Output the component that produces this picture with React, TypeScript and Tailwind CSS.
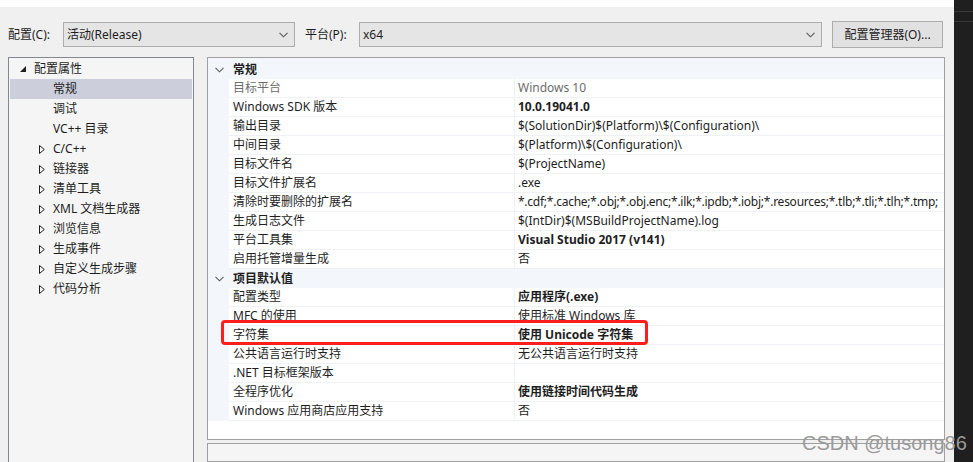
import React from "react";

type Row = { label: string; value?: string; bold?: boolean; dim?: boolean; tight?: boolean };

const general: Row[] = [
  { label: "目标平台", value: "Windows 10", dim: true },
  { label: "Windows SDK 版本", value: "10.0.19041.0", bold: true },
  { label: "输出目录", value: "$(SolutionDir)$(Platform)\\$(Configuration)\\" },
  { label: "中间目录", value: "$(Platform)\\$(Configuration)\\" },
  { label: "目标文件名", value: "$(ProjectName)" },
  { label: "目标文件扩展名", value: ".exe" },
  {
    label: "清除时要删除的扩展名",
    value: "*.cdf;*.cache;*.obj;*.obj.enc;*.ilk;*.ipdb;*.iobj;*.resources;*.tlb;*.tli;*.tlh;*.tmp;",
    tight: true,
  },
  { label: "生成日志文件", value: "$(IntDir)$(MSBuildProjectName).log" },
  { label: "平台工具集", value: "Visual Studio 2017 (v141)", bold: true },
  { label: "启用托管增量生成", value: "否" },
];

const defaults: Row[] = [
  { label: "配置类型", value: "应用程序(.exe)", bold: true },
  { label: "MFC 的使用", value: "使用标准 Windows 库" },
  { label: "字符集", value: "使用 Unicode 字符集", bold: true },
  { label: "公共语言运行时支持", value: "无公共语言运行时支持" },
  { label: ".NET 目标框架版本", value: "" },
  { label: "全程序优化", value: "使用链接时间代码生成", bold: true },
  { label: "Windows 应用商店应用支持", value: "否" },
];

const tree = ["常规", "调试", "VC++ 目录", "C/C++", "链接器", "清单工具", "XML 文档生成器", "浏览信息", "生成事件", "自定义生成步骤", "代码分析"];

function Chevron() {
  return (
    <svg width="9" height="6" viewBox="0 0 9 6" className="shrink-0">
      <path d="M0.5 0.8 L4.5 4.8 L8.5 0.8" fill="none" stroke="#5a5a5a" strokeWidth="1.1" />
    </svg>
  );
}

function Combo({ text, width }: { text: string; width: string }) {
  return (
    <div className={`${width} h-[25px] flex items-center justify-between border border-[#adadad] bg-[#e5e5e5] pl-[3px] pr-[6px]`}>
      <span>{text}</span>
      <Chevron />
    </div>
  );
}

function Category({ label }: { label: string }) {
  return (
    <div className="flex h-[19px] items-center bg-[#f3f6fb]">
      <div className="w-[21px] flex justify-center pl-[1px]">
        <Chevron />
      </div>
      <span className="pl-[4px] font-bold">{label}</span>
    </div>
  );
}

function PropRow({ r }: { r: Row }) {
  return (
    <div className="flex h-[19px]">
      <div className="w-[21px] shrink-0 bg-[#f3f6fb]" />
      <div className={`w-[285px] shrink-0 border-b border-[#eef1f6] pl-[4px] leading-[18px] bg-white ${r.dim ? "text-[#6d6d6d]" : ""}`}>
        {r.label}
      </div>
      <div
        className={`flex-1 min-w-0 overflow-hidden whitespace-nowrap border-b border-l border-[#eef1f6] pl-[3px] leading-[18px] bg-white ${
          r.bold ? "font-bold" : ""
        } ${r.dim ? "text-[#6d6d6d]" : ""} ${r.tight ? "tracking-[-0.25px]" : ""}`}
      >
        {r.value}
      </div>
    </div>
  );
}

export default function App() {
  return (
    <div className="relative w-[973px] h-[462px] overflow-hidden flex text-[12px] text-[#1e1e1e] font-['Segoe_UI','Noto_Sans','Noto_Sans_CJK_SC',sans-serif]">
      <div className="w-[954px] flex flex-col bg-[#f0f0f0]">
        <div className="h-[7px] bg-white" />
        <div className="flex items-center h-[29px] mt-[13px] pl-[8px]">
          <span className="w-[55px]">配置(C):</span>
          <Combo text="活动(Release)" width="w-[232px]" />
          <span className="ml-[10px] w-[54px]">平台(P):</span>
          <Combo text="x64" width="w-[463px]" />
          <button className="ml-[10px] w-[111px] h-[27px] border border-[#adadad] bg-[#e1e1e1]">配置管理器(O)...</button>
        </div>
        <div className="flex mt-[8px] pl-[8px] gap-[13px] flex-1 min-h-0">
          <div className="w-[186px] h-[420px] border border-[#828790] bg-[#f5f5f5] p-px">
            <div className="flex items-center h-[20px]">
              <svg width="6" height="6" viewBox="0 0 6 6" className="ml-[10px]">
                <path d="M6 0 L6 6 L0 6 Z" fill="#1e1e1e" />
              </svg>
              <span className="ml-[8px]">配置属性</span>
            </div>
            {tree.map((t, i) => (
              <div key={t} className={`flex items-center h-[20px] ${i === 0 ? "bg-[#cccedb]" : ""}`}>
                <div className="w-[43px] flex justify-end pr-[8px]">
                  {i >= 3 && (
                    <svg width="6" height="9" viewBox="0 0 6 9">
                      <path d="M0.5 0.5 L5.3 4.5 L0.5 8.5 Z" fill="none" stroke="#1e1e1e" strokeWidth="1" />
                    </svg>
                  )}
                </div>
                <span>{t}</span>
              </div>
            ))}
          </div>
          <div className="flex flex-col w-[738px]">
            <div className="h-[399px] border border-[#a0a0a0] bg-white">
              <div className="h-[2px] bg-[#f3f6fb]" />
              <Category label="常规" />
              {general.map((r) => (
                <PropRow key={r.label} r={r} />
              ))}
              <Category label="项目默认值" />
              {defaults.map((r) => (
                <PropRow key={r.label} r={r} />
              ))}
            </div>
            <div className="mt-[3px] h-[20px] border border-[#a0a0a0] bg-[#f5f5f5]" />
          </div>
        </div>
      </div>
      <div className="w-[19px] bg-[#1f1f1f] flex flex-col">
        <div className="h-[11px]" />
        <div className="h-px bg-[#3a3a3a]" />
        <div className="h-[9px]" />
        <div className="h-px bg-[#3a3a3a]" />
      </div>
      <div className="absolute left-[221px] top-[320px] w-[427px] h-[25px] border-[3px] border-[#ff1e1e] rounded-[4px]" />
      <div className="absolute left-[802px] top-[428px] text-[20px] text-[#9a9a9a] font-['Liberation_Sans',sans-serif]">CSDN @tusong86</div>
    </div>
  );
}
